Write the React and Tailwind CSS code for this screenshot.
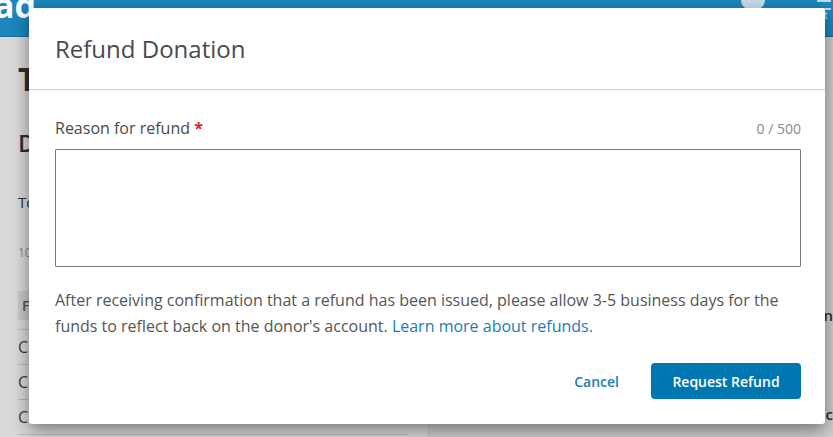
import React from 'react';

const font = { fontFamily: '"Open Sans", "Noto Sans", sans-serif' };

// dimmed page that sits behind the modal
const Backdrop = () => (
  <div className="flex flex-col w-full h-full bg-[#d9d9d9]">
    <div className="h-[37px] bg-[#1b87bd] flex items-start justify-between border-b border-[#16709c] overflow-hidden">
      <span className="text-white font-bold text-[34px] leading-none -ml-[6px] -mt-[12px]">ad</span>
      <div className="flex items-start gap-[52px] pr-[2px]">
        <div className="w-[24px] h-[10px] rounded-b-full bg-[#c7dde9]" />
        <div className="flex flex-col items-center">
          <div className="w-[14px] h-[10px] border-y-2 border-[#c7dde9]" />
          <span className="text-[10px] text-[#c7dde9] leading-none">rt</span>
        </div>
      </div>
    </div>
    <div className="flex flex-1">
      <div className="w-[428px] pl-[18px] pr-[20px] pt-[26px] text-[#2e2e2e]">
        <div className="text-[32px] font-bold leading-none">Transactions</div>
        <div className="text-[24px] font-semibold mt-[36px] leading-none">Donations</div>
        <div className="text-[15px] mt-[36px]">Total</div>
        <div className="text-[12px] text-[#8a8a8a] mt-[30px]">10 results</div>
        <div className="mt-[29px] bg-[#c9c9c9] h-[29px] flex items-center px-[4px] text-[14px] font-semibold text-[#555]">Fund</div>
        <div className="h-[10px] border-b border-[#bdbdbd]" />
        <div className="h-[35px] flex items-center border-b border-[#bdbdbd] text-[16px] text-[#3a3a3a]">C</div>
        <div className="h-[35px] flex items-center border-b border-[#bdbdbd] text-[16px] text-[#3a3a3a]">C</div>
        <div className="h-[35px] flex items-center border-b border-[#bdbdbd] text-[16px] text-[#3a3a3a]">C</div>
      </div>
      <div className="flex-1 bg-[#cfcfcf] border-l border-[#c2c2c2] flex flex-col items-end justify-end pb-[12px] text-[15px] font-semibold text-[#2e2e2e]">
        <span className="mb-[76px]">in</span>
        <span>ac</span>
      </div>
    </div>
  </div>
);

export default function App() {
  return (
    <div className="relative w-[833px] h-[437px] overflow-hidden" style={font}>
      <Backdrop />

      <div className="absolute left-[29px] top-[8px] w-[796px] h-[416px] bg-white rounded-[3px] shadow-[0_6px_18px_rgba(0,0,0,0.45)] flex flex-col">
        <div className="h-[82px] flex items-center px-[26px] border-b border-[#cfcfcf]">
          <h2 className="text-[24px] text-[#4a4a4a] leading-none">Refund Donation</h2>
        </div>

        <div className="flex flex-col pl-[26px] pr-[24px] pt-[28px] pb-[25px] flex-1">
          <div className="flex items-end justify-between h-[20px]">
            <label className="text-[16px] font-medium text-[#4a4a4a] leading-[20px]">
              Reason for refund <span className="text-[#e01b1b] font-bold">*</span>
            </label>
            <span className="text-[14px] text-[#8a8a8a] leading-[18px]">0 / 500</span>
          </div>

          <textarea className="mt-[11px] h-[118px] w-full border border-[#767676] rounded-[1px] resize-none outline-none" />

          <p className="mt-[20px] text-[16px] leading-[26px] text-[#555]">
            After receiving confirmation that a refund has been issued, please allow 3-5 business days for the funds to reflect back on the donor's account.{' '}
            <a className="text-[#1b7db5]">Learn more about refunds.</a>
          </p>

          <div className="mt-auto flex items-center justify-end gap-[32px]">
            <button className="text-[14px] font-semibold text-[#1b7db5]">Cancel</button>
            <button className="w-[150px] h-[36px] rounded-[4px] bg-[#0077b0] text-white text-[14px] font-semibold">
              Request Refund
            </button>
          </div>
        </div>
      </div>
    </div>
  );
}
